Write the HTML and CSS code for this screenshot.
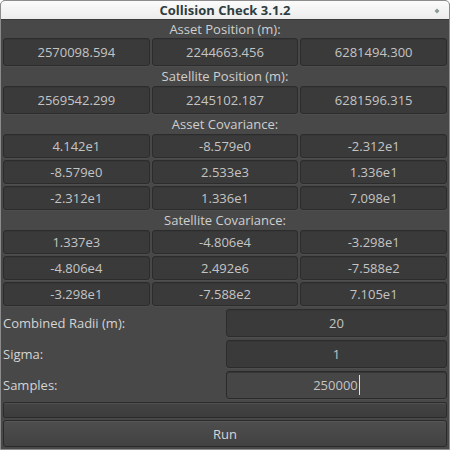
FILE: index.html
```html
<!DOCTYPE html>
<html>
<head>
<meta charset="utf-8">
<link rel="stylesheet" href="styles.css">
</head>
<body>
<div class="window">
  <div class="titlebar">
    <span class="title">Collision Check 3.1.2</span>
    <svg class="tb-icon" width="6" height="6" viewBox="0 0 6 6"><path d="M3 0.5 L5.5 3 L3 5.5 L0.5 3 Z" fill="#8a9a9a"/></svg>
  </div>
  <div class="content">
    <div class="section-label first">Asset Position (m):</div>
    <div class="grid3 tall">
      <div class="field">2570098.594</div>
      <div class="field">2244663.456</div>
      <div class="field">6281494.300</div>
    </div>
    <div class="section-label">Satellite Position (m):</div>
    <div class="grid3 tall">
      <div class="field">2569542.299</div>
      <div class="field">2245102.187</div>
      <div class="field">6281596.315</div>
    </div>
    <div class="section-label">Asset Covariance:</div>
    <div class="grid3 short">
      <div class="field">4.142e1</div>
      <div class="field">-8.579e0</div>
      <div class="field">-2.312e1</div>
      <div class="field">-8.579e0</div>
      <div class="field">2.533e3</div>
      <div class="field">1.336e1</div>
      <div class="field">-2.312e1</div>
      <div class="field">1.336e1</div>
      <div class="field">7.098e1</div>
    </div>
    <div class="section-label">Satellite Covariance:</div>
    <div class="grid3 short">
      <div class="field">1.337e3</div>
      <div class="field">-4.806e4</div>
      <div class="field">-3.298e1</div>
      <div class="field">-4.806e4</div>
      <div class="field">2.492e6</div>
      <div class="field">-7.588e2</div>
      <div class="field">-3.298e1</div>
      <div class="field">-7.588e2</div>
      <div class="field">7.105e1</div>
    </div>
    <div class="params">
      <div class="plabel">Combined Radii (m):</div>
      <div class="field">20</div>
      <div class="plabel">Sigma:</div>
      <div class="field">1</div>
      <div class="plabel">Samples:</div>
      <div class="field focused">250000<span class="caret"></span></div>
    </div>
    <div class="progress"></div>
    <div class="button">Run</div>
  </div>
</div>
</body>
</html>
```
FILE: styles.css
```css
* { box-sizing: border-box; }
html, body { margin: 0; padding: 0; background: #ffffff; }
body {
  font-family: "Open Sans", "DejaVu Sans", sans-serif;
  font-size: 13px;
  width: 450px;
  height: 450px;
  overflow: hidden;
}
.window {
  width: 450px;
  height: 450px;
  border: 1px solid #8c8c8c;
  border-radius: 5px 5px 0 0;
  background: #484848;
  overflow: hidden;
  display: flex;
  flex-direction: column;
}
.titlebar {
  height: 19px;
  flex: none;
  background: linear-gradient(#fbfbfb, #ececec);
  border-bottom: 1px solid #3a3a3a;
  display: flex;
  align-items: center;
  justify-content: center;
  position: relative;
}
.title {
  font-weight: bold;
  color: #2e3d40;
  font-size: 13px;
  line-height: 18px;
}
.tb-icon {
  position: absolute;
  right: 9px;
  top: 7px;
}
.content {
  flex: 1;
  padding: 0 1px 1px 1px;
  display: flex;
  flex-direction: column;
}
.section-label {
  height: 20px;
  line-height: 20px;
  text-align: center;
  color: #cfcfcf;
}
.section-label.first { height: 18px; line-height: 18px; }
.grid3 {
  display: grid;
  grid-template-columns: 1fr 1fr 1fr;
  column-gap: 2px;
  row-gap: 2px;
  padding: 0 1px;
}
.field {
  background: #3a3a3a;
  border: 1px solid #2c2c2c;
  border-radius: 3px;
  box-shadow: inset 0 1px 0 #363636, 0 1px 0 #4e4e4e;
  color: #c4c4c4;
  text-align: center;
  display: flex;
  align-items: center;
  justify-content: center;
}
.grid3.tall .field { height: 28px; }
.grid3.short .field { height: 24px; }
.params {
  display: grid;
  grid-template-columns: 224px 1fr;
  row-gap: 3px;
  margin-top: 3px;
  padding-right: 1px;
}
.params .field { height: 28px; }
.plabel {
  color: #d4d4d4;
  display: flex;
  align-items: center;
  padding-left: 1px;
}
.field.focused {
  background: #464646;
  border-color: #2a2a2a;
}
.caret {
  display: inline-block;
  width: 1px;
  height: 20px;
  background: #e0e0e0;
  margin-left: 1px;
}
.progress {
  height: 16px;
  margin: 3px 1px 2px 1px;
  border: 1px solid #2c2c2c;
  border-radius: 2px;
  background: linear-gradient(#444444, #3c3c3c);
  box-shadow: inset 0 1px 0 #505050;
}
.button {
  height: 27px;
  margin: 0 1px;
  border: 1px solid #2a2a2a;
  border-radius: 3px;
  background: linear-gradient(#4e4e4e, #424242);
  box-shadow: inset 0 1px 0 #575757;
  color: #d6d6d6;
  display: flex;
  align-items: center;
  justify-content: center;
}
```
